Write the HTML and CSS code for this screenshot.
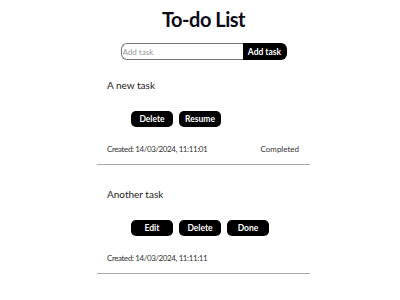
FILE: index.html
```html
<!DOCTYPE html>
<html lang="en">
<head>
<meta charset="utf-8">
<title>To-do List</title>
<link rel="stylesheet" href="styles.css">
</head>
<body>
<main class="app">
  <h1 class="title">To-do List</h1>
  <form class="add-form">
    <input class="add-input" type="text" placeholder="Add task">
    <button class="add-btn" type="button">Add task</button>
  </form>
  <div class="list">
    <div class="task">
      <p class="task-text">A new task</p>
      <div class="actions">
        <button class="btn" type="button">Delete</button>
        <button class="btn" type="button">Resume</button>
      </div>
      <div class="meta">
        <span class="created">Created: 14/03/2024, 11:11:01</span>
        <span>Completed</span>
      </div>
    </div>
    <div class="task">
      <p class="task-text">Another task</p>
      <div class="actions">
        <button class="btn" type="button">Edit</button>
        <button class="btn" type="button">Delete</button>
        <button class="btn" type="button">Done</button>
      </div>
      <div class="meta">
        <span class="created">Created: 14/03/2024, 11:11:11</span>
      </div>
    </div>
  </div>
</main>
</body>
</html>
```
FILE: styles.css
```css
* { box-sizing: border-box; }
html, body { margin: 0; padding: 0; background: #fff; }
body {
  font-family: "Lato", "Inter", "Liberation Sans", sans-serif;
  color: #111;
  padding-left: 7px;
}
.app {
  width: 213px;
  margin: 0 auto;
  display: flex;
  flex-direction: column;
}
.title {
  margin: 7px 0 0;
  font-size: 20px;
  line-height: 24px;
  font-weight: 700;
  letter-spacing: -0.5px;
  text-align: center;
  color: #0c0c14;
}
.add-form {
  margin: 12px 0 19px;
  display: flex;
  justify-content: center;
}
.add-input {
  width: 122px;
  height: 17px;
  border: 1px solid #777;
  border-right: none;
  border-radius: 6px 0 0 6px;
  padding: 0 1px;
  font-family: inherit;
  font-size: 8px;
  color: #333;
  outline: none;
}
.add-input::placeholder { color: #999; }
.add-btn {
  width: 44px;
  height: 17px;
  border: none;
  background: #000;
  color: #fff;
  font-family: inherit;
  font-weight: 700;
  font-size: 8.5px;
  border-radius: 0 6px 6px 0;
  padding: 0;
}
.list {
  display: flex;
  flex-direction: column;
  gap: 23px;
}
.task {
  padding: 0 11px 10px 10px;
  border-bottom: 1px solid #aaa;
}
.task-text {
  margin: 0;
  font-size: 10px;
  line-height: 12px;
  color: #222;
}
.actions {
  margin: 20px 0 0 24px;
  display: flex;
  gap: 6px;
}
.btn {
  width: 42px;
  height: 16px;
  border: none;
  border-radius: 5px;
  background: #000;
  color: #fff;
  font-family: inherit;
  font-weight: 700;
  font-size: 8.5px;
  padding: 0;
}
.meta {
  margin-top: 17px;
  display: flex;
  justify-content: space-between;
  font-size: 8px;
  line-height: 10px;
  color: #333;
}
.created { letter-spacing: -0.4px; }
```
